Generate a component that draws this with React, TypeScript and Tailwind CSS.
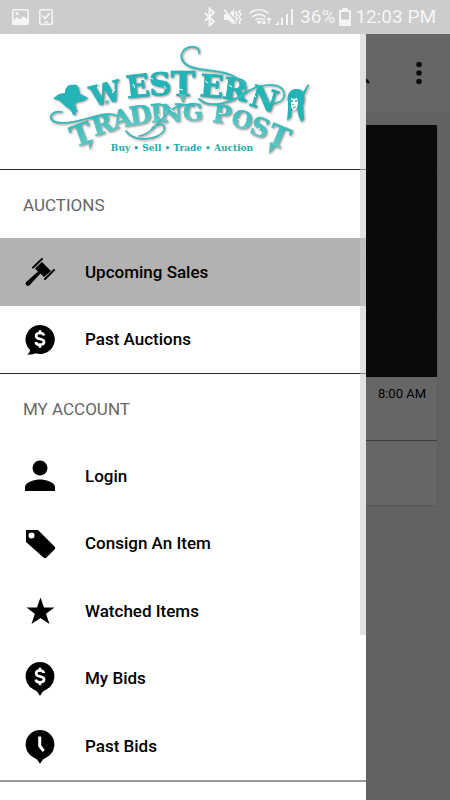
import type { ReactNode } from "react";

const TEAL = "#22b4b6";

type Glyph = { ch: string; x: number; y: number; size: number; rotate: number };

// x is the middle of the letter, y its baseline
const western: Glyph[] = [
  { ch: "W", x: 63, y: 63, size: 28, rotate: -14 },
  { ch: "E", x: 94, y: 57, size: 31, rotate: -6 },
  { ch: "S", x: 116, y: 55, size: 31, rotate: -4 },
  { ch: "T", x: 138, y: 56, size: 33, rotate: 0 },
  { ch: "E", x: 166, y: 57, size: 31, rotate: 4 },
  { ch: "R", x: 189, y: 60, size: 30, rotate: 8 },
  { ch: "N", x: 216, y: 69, size: 30, rotate: 17 },
];

const trading: Glyph[] = [
  { ch: "T", x: 40, y: 104, size: 29, rotate: -20 },
  { ch: "R", x: 60, y: 93, size: 26, rotate: -17 },
  { ch: "A", x: 79, y: 87, size: 25, rotate: -13 },
  { ch: "D", x: 97, y: 84, size: 26, rotate: -9 },
  { ch: "I", x: 112, y: 82, size: 25, rotate: -5 },
  { ch: "N", x: 127, y: 82, size: 25, rotate: -3 },
  { ch: "G", x: 148, y: 81, size: 24, rotate: 0 },
  { ch: "P", x: 176, y: 83, size: 25, rotate: 8 },
  { ch: "O", x: 195, y: 88, size: 24, rotate: 15 },
  { ch: "S", x: 212, y: 96, size: 26, rotate: 20 },
  { ch: "T", x: 230, y: 106, size: 29, rotate: 23 },
];

function ArchedWord({ glyphs, fill, weight }: { glyphs: Glyph[]; fill: string; weight: number }) {
  return (
    <g fill={fill} stroke={fill} strokeWidth={weight} fontWeight="700" textAnchor="middle">
      {glyphs.map((g) => (
        <text key={g.x} x={g.x} y={g.y} fontSize={g.size} transform={`rotate(${g.rotate} ${g.x} ${g.y})`}>
          {g.ch}
        </text>
      ))}
    </g>
  );
}

function Logo() {
  return (
    <svg
      viewBox="0 0 270 120"
      className="h-[120px] w-[270px] overflow-visible font-['DejaVu_Serif','Liberation_Serif',serif]"
      role="img"
      aria-label="Western Trading Post"
    >
      <defs>
        <linearGradient id="lower" x1="0" y1="0" x2="0" y2="1">
          <stop offset="0" stopColor="#2fb8b8" />
          <stop offset="1" stopColor="#6dccc8" />
        </linearGradient>
      </defs>
      <g className="drop-shadow-[1px_1px_1px_rgba(90,60,60,0.6)]">
        {/* cowboy */}
        <path
          d="M8 59c3-4 7-6 12-6 0-6 4-9 8-8 3-1 6 1 6 5l1 4c3 1 5 2 8 4-4 3-8 4-11 4l-3 3 3 2-2 1 3 3-3 1 1 3-3 0c-1-5-5-7-8-9-3-3-5-7-12-7z"
          fill={TEAL}
        />
        {/* chief */}
        <path
          d="M243 62c-2-8 3-14 9-13 3 0 5 1 6 3l5-8 1 1-5 10c1 4 0 7-1 11l1 13-3 3-3-8-1-7-5 1-1 9-4 4 1-11z"
          fill={TEAL}
        />
        <path d="M246 58l3 1 3-1 1 5-1 5-3 3-3-4z" fill="#fff" />
        <path d="M246 61h2M250 61h2M248 64v1M248 68l3-1" stroke={TEAL} strokeWidth="1.300" />
        <ArchedWord glyphs={trading} fill="url(#lower)" weight={0.4} />
        <ArchedWord glyphs={western} fill={TEAL} weight={0.7} />
        {/* rope flourishes */}
        <g fill="none" stroke="#35babb" strokeLinecap="round">
          <path d="M17 72C9 70 3 76 7 80c7 7 30 0 44-4 10-3 18-2 21 0" strokeWidth="1.800" />
          <path d="M81 91c8 12 34 9 38-1 2-7-6-7-12-2M94 96c12-1 20-16 31-25 7-6 17-8 24-5" strokeWidth="1.600" />
          <path d="M154 13c1-7-10-8-15-3-6 7-1 14 7 17 15 5 31 2 44 10 9 5 15 11 8 17-12 9-34 15-44 5" strokeWidth="1.900" />
          <path d="M196 57c14-14 42-17 43-3 1 9-14 13-21 5" strokeWidth="1.700" />
        </g>
        {/* drips under the stems */}
        <path d="M134 54h7l-3 10zM43 101l5-2-3 11zM225 103l6 3-7 8zM60 61l4-1-2 5z" fill="#4fc2c0" />
      </g>
      {/* worn spots */}
      <path
        d="M52 47l4 2M67 53l3-4M88 44l2 4M104 38l4 1M119 46l2 3M134 49l4 1M160 41l3 2M171 50l3-1M184 45l3 2M208 54l3 3M84 72l3 2M95 79l4-3M105 69l3 7M113 74l3 4M125 69l4 3M145 75l4-1M174 73l3 1M193 79l3 2M212 90l3-2"
        stroke="#fff"
        strokeWidth="1"
      />
      <text x="137" y="111" fontSize="9" fontWeight="700" textAnchor="middle" fill="#1fa9ab">
        Buy • Sell • Trade • Auction
      </text>
    </svg>
  );
}

function Icon({ children }: { children: ReactNode }) {
  return (
    <svg viewBox="0 0 36 36" className="size-9 shrink-0" fill="currentColor" aria-hidden="true">
      {children}
    </svg>
  );
}

const dollar = (
  <path
    d="M22 13.500c-.5-1.700-1.900-2.500-4-2.500-2.300 0-3.900 1-3.900 2.900 0 4.300 8 1.800 8 5.900 0 2-1.700 3-4.100 3-2.300 0-4-.9-4.300-2.800M18 8.200v3M18 22.500v3.200"
    fill="none"
    stroke="#fff"
    strokeWidth="2.600"
  />
);

const icons = {
  gavel: (
    <Icon>
      <path d="M20 8l9 9-7 6-3.500-3.500L7.500 31.200a2.300 2.300 0 0 1-3.300-3.200L16 17.500l-3-3z" />
      <path d="M11 13.500L20 5M23 25L32 16" stroke="currentColor" strokeWidth="2" strokeLinecap="round" />
    </Icon>
  ),
  chat: (
    <Icon>
      <path d="M18.500 3a14.500 14.500 0 1 1-5 28.200c-2 1.300-5 1.700-8.500 1.200 2-1 3-2.600 3-4.400A14.500 14.500 0 0 1 18.500 3z" />
      {dollar}
    </Icon>
  ),
  person: (
    <Icon>
      <circle cx="18" cy="10" r="7.500" />
      <path d="M3 33v-4c0-5 10-7.500 15-7.500S33 24 33 29v4z" />
    </Icon>
  ),
  tag: (
    <Icon>
      <path
        fillRule="evenodd"
        d="M4 4h12L32.500 20.500c1 1 1 2 0 3l-8 8c-1 1-2 1-3 0L4 16zM9.500 6.500a3 3 0 1 0 0 6 3 3 0 0 0 0-6z"
      />
    </Icon>
  ),
  star: (
    <Icon>
      <path d="M18.500 4.500l3.500 10h10.500l-8.500 6.300L27.500 31l-9-6-9 6 3.300-10.200-8.300-6.300H15z" />
    </Icon>
  ),
  bid: (
    <Icon>
      <path d="M18 1a14.500 14.500 0 0 1 6 27.700c-3 1.300-4.500 3.300-6 6.300-1.500-3-3-5-6-6.300A14.500 14.500 0 0 1 18 1z" />
      <g transform="translate(0 -1.500)">{dollar}</g>
    </Icon>
  ),
  clock: (
    <Icon>
      <path d="M18 1a14.500 14.500 0 0 1 6 27.700c-3 1.300-4.500 3.300-6 6.300-1.500-3-3-5-6-6.300A14.500 14.500 0 0 1 18 1z" />
      <path d="M17.700 7.500v9.500l4 5" fill="none" stroke="#fff" strokeWidth="3" />
    </Icon>
  ),
};

type Item = { label: string; icon: keyof typeof icons; active?: boolean };

const auctions: Item[] = [
  { label: "Upcoming Sales", icon: "gavel", active: true },
  { label: "Past Auctions", icon: "chat" },
];

const account: Item[] = [
  { label: "Login", icon: "person" },
  { label: "Consign An Item", icon: "tag" },
  { label: "Watched Items", icon: "star" },
  { label: "My Bids", icon: "bid" },
  { label: "Past Bids", icon: "clock" },
];

function MenuSection({ title, items, listClass }: { title: string; items: Item[]; listClass: string }) {
  return (
    <section className="border-t border-[#2a2a2a]">
      <h2 className="flex h-[68px] items-center px-[23px] pt-[3px] text-[17px] text-[#666]">{title}</h2>
      <ul className={`flex flex-col ${listClass}`}>
        {items.map((item) => (
          <li key={item.label} className="flex flex-1">
            <a
              href="#"
              aria-current={item.active ? "page" : undefined}
              className={`flex flex-1 items-center gap-[27px] px-[22px] pt-px text-[17px] font-medium text-black ${
                item.active ? "bg-[#b2b2b2]" : ""
              }`}
            >
              {icons[item.icon]}
              {item.label}
            </a>
          </li>
        ))}
      </ul>
    </section>
  );
}

function StatusBar() {
  return (
    <header className="flex h-[34px] shrink-0 items-center bg-[#ccc] pr-3.5 pl-3 text-[19px] text-[#f5f5f5]">
      <svg viewBox="0 0 42 18" className="h-[18px] w-[42px]" fill="none" stroke="currentColor" aria-hidden="true">
        <rect x="0.800" y="1.800" width="15.400" height="14.400" rx="1" strokeWidth="1.600" />
        <path d="M1 13l4-4 3 2.500L11.500 8l4.500 4v4H1z" fill="currentColor" stroke="none" />
        <circle cx="5" cy="5.500" r="1.600" fill="currentColor" stroke="none" />
        <rect x="27.800" y="1.800" width="12.400" height="14.400" rx="1" strokeWidth="1.600" />
        <path d="M30 7.500l3 3 5-5.500M32 14h4" strokeWidth="1.600" />
      </svg>
      <div className="ml-auto flex items-center">
        <svg viewBox="0 0 90 20" className="mr-1.5 h-5 w-[90px]" fill="none" stroke="currentColor" aria-hidden="true">
          <path d="M1 6l9 8.500-4.500 4V1.500l4.500 4L1 14" strokeWidth="1.900" />
          <path d="M20 7h4L30 2.500v15L24 13h-4z" fill="currentColor" stroke="none" />
          <path d="M21 1.500l12 14" stroke="#ccc" strokeWidth="1.500" />
          <path d="M20 2.500L32 17" strokeWidth="1.600" />
          <path d="M33 4l-1.500 2 2 2-2 2 2 2-2 2M36.500 3L35 5l2 2.500-2 2.500 2 2.500-2 2.500 1 2" strokeWidth="1.500" />
          <path d="M45.500 6.500c5-5 14-5 19 0M48.500 10c3.500-3.500 9.500-3.500 13 0M51.500 13c2-2 5-2 7 0" strokeWidth="1.700" />
          <path d="M53 14.500l2 2.500 2-2.500z" fill="currentColor" />
          <path d="M60 11v6M58 15l2 2 2-2M65 17v-6M63 13l2-2 2 2" strokeWidth="1.300" />
          <path d="M71 18l4-4v4zM77 11h2v7h-2zM82 7h2v11h-2zM87 2h2v16h-2z" fill="currentColor" stroke="none" />
        </svg>
        <span>36%</span>
        <svg viewBox="0 0 12 18" className="mx-1 h-[18px] w-3" fill="currentColor" aria-hidden="true">
          <path d="M3.500 0h5v2H12v16H0V2h3.500z" />
          <path d="M2 4h8v7.500H2z" fill="#ccc" />
        </svg>
        <time>12:03 PM</time>
      </div>
    </header>
  );
}

export default function App() {
  return (
    <div className="flex min-h-screen flex-col bg-[#f5f5f0] font-['Roboto',sans-serif]">
      <StatusBar />
      <div className="relative flex flex-1 flex-col">
        <main className="flex flex-col">
          <div className="flex h-[78px] items-center justify-end gap-8 bg-white pr-[19px]">
            <button type="button" aria-label="Search">
              <svg viewBox="0 0 24 24" className="size-8" aria-hidden="true">
                <path d="M14 14l5.500 5.500M9 3.500a6 6 0 1 0 0 12 6 6 0 0 0 0-12z" fill="none" stroke="#222" strokeWidth="2" />
              </svg>
            </button>
            <button type="button" aria-label="More options">
              <svg viewBox="0 0 24 24" className="h-6 w-6" fill="#222" aria-hidden="true">
                <circle cx="12" cy="3.500" r="2.800" />
                <circle cx="12" cy="12" r="2.800" />
                <circle cx="12" cy="20.500" r="2.800" />
              </svg>
            </button>
          </div>
          <article className="mx-[13px] mt-[13px] bg-white shadow-sm">
            <div className="h-[252px] bg-[#1c1816] bg-[repeating-radial-gradient(circle_at_70%_60%,#1b1816_0px,#1f1b19_4px,#1b1816_8px)]" />
            <p className="flex h-16 justify-end border-b border-[#999] px-[11px] pt-[7px] text-[13px] text-black">
              8:00 AM
            </p>
            <div className="h-16" />
          </article>
        </main>

        {/* dims the page behind the open drawer */}
        <div className="absolute inset-0 bg-black/60" />

        <aside className="absolute inset-y-0 left-0 w-[366px] max-w-[85%] overflow-hidden bg-white">
          <div className="flex h-[135px] items-start justify-center pt-1.5 pr-1.5">
            <Logo />
          </div>
          <nav aria-label="Main menu">
            <MenuSection title="AUCTIONS" items={auctions} listClass="h-[135px]" />
            <MenuSection title="MY ACCOUNT" items={account} listClass="h-[338px]" />
            <hr className="border-t-2 border-[#999]" />
          </nav>
          <div className="absolute top-0 right-0 h-[601px] w-1.5 bg-[#cacaca]/55" />
        </aside>
      </div>
    </div>
  );
}
